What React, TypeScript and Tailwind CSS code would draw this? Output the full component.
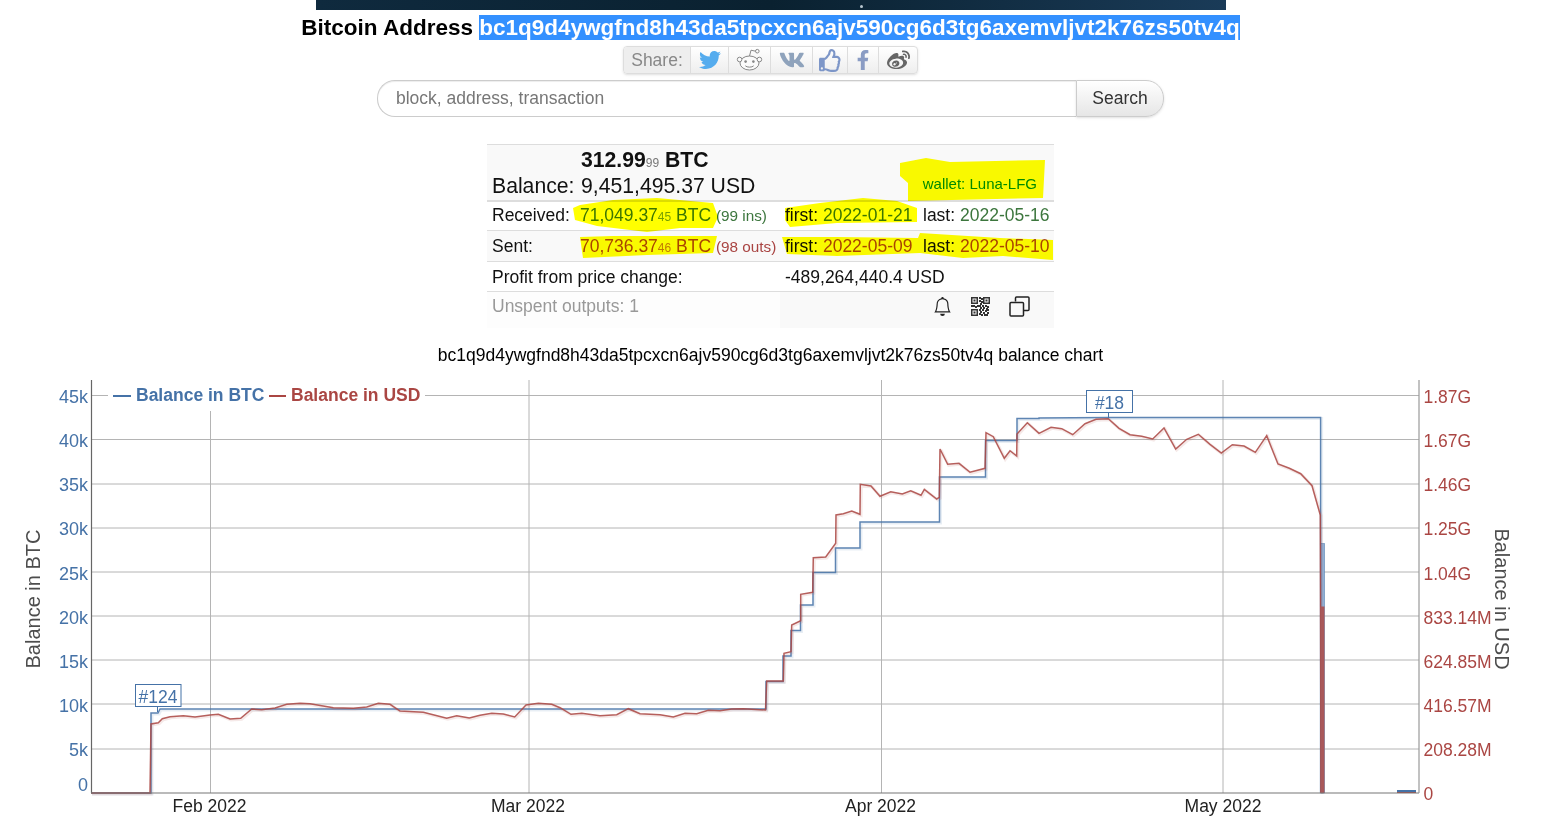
import React from 'react';
import { FaTwitter, FaVk, FaRegThumbsUp, FaFacebookF, FaWeibo } from 'react-icons/fa';
import { BsBell } from 'react-icons/bs';

const address = 'bc1q9d4ywgfnd8h43da5tpcxcn6ajv590cg6d3tg6axemvljvt2k76zs50tv4q';

const BLUE = '#4572a7';
const RED = '#aa4643';

const leftLabels = ['45k', '40k', '35k', '30k', '25k', '20k', '15k', '10k', '5k'];
const rightLabels = ['1.87G', '1.67G', '1.46G', '1.25G', '1.04G', '833.14M', '624.85M', '416.57M', '208.28M'];
const gridY = [395.5, 439.5, 484, 528, 572, 616, 660, 704, 749];
const labelY = [402.5, 446.5, 490.5, 534.5, 579.5, 623.5, 667.5, 711.5, 755.5];

const months = [
  { x: 210.5, textX: 209.5, label: 'Feb 2022' },
  { x: 529, textX: 528, label: 'Mar 2022' },
  { x: 881.5, textX: 880.5, label: 'Apr 2022' },
  { x: 1223, textX: 1223, label: 'May 2022' },
];

const btcLine =
  '91,793 151,793 151,713 158,713 160,709 766,709 766,681.5 783,681.5 783,656 791,656 791,630.5 800.5,630.5 800.5,605 813,605 813,572.5 835.5,572.5 835.5,548 860,548 860,522 939.5,522 939.5,477 985.5,477 985.5,440.5 1017,440.5 1017,418.5 1039,418.5 1039,418 1108,417.6 1320.6,417.6 1320.6,793';

const usdLine =
  '91,793 150,793 151,724 158.3,722.7 162.3,718.7 170,716.7 183.3,715.7 195,717 210,715 218.3,714.3 230,719 240.7,718.3 251.7,709 261.7,709.7 275,708 286.7,704.3 300,703.3 310,703.7 321.7,705.7 333.3,707.7 353.3,708.3 366.7,707 378.3,703.3 390,704.3 400,711 423.3,712.3 446.7,718.3 456.7,715.7 469.3,718 480,715.3 491.7,713.3 503.3,714 514.7,717 526,705 538.3,703.3 551.7,704.3 560,707.7 571,714.3 581.7,713.3 600,715.7 616.7,714.7 628.3,708.7 640,713.7 660,714.7 673.3,717 685,713.3 696.7,713.7 708.3,710.3 720,710.7 731.7,709 743.3,708.7 765.5,710 766.7,681 783.3,681 784,653.3 791,651.7 791.7,625 800.7,620.7 800.7,594.3 812.7,592.3 813.3,557.7 825.7,557 835.7,543.3 836,515 843.3,513.7 851.7,511 860,514.3 860.3,484.3 871,486 880,496.3 890.7,491.7 902.3,494 910.7,490.7 921,495.3 924.3,489.3 936.7,499 939.3,497.3 940,449 947.7,464.3 959,463.3 970,472.3 985,468.3 986,432.7 993.3,436.7 1004.3,458.3 1010,450.7 1016.7,456 1017,434 1027.3,422.7 1039,433.3 1051,427.3 1061.7,428.7 1072.7,434.7 1085,423.7 1096,419.3 1108.3,418.7 1119,428.3 1130,434.7 1141.7,436.3 1152.7,439 1164,428 1175.7,449 1186.7,439.3 1198.3,434.3 1210,444.3 1221.3,453 1232.3,444.7 1244,446 1255.3,452.3 1266.7,435.7 1278,464 1289.3,468.3 1300.7,473.7 1312,485.7 1320.3,515 1321,793';

function RedditIcon() {
  return (
    <svg width="27" height="24" viewBox="0 0 27 24" fill="none" stroke="#888" strokeWidth="1">
      <ellipse cx="13.5" cy="15" rx="9.5" ry="7" fill="#fbfbfb" />
      <circle cx="3.6" cy="11.5" r="2.3" fill="#fbfbfb" />
      <circle cx="23.4" cy="11.5" r="2.3" fill="#fbfbfb" />
      <path d="M13.5 8 L15 2.2 L19.5 3.2" />
      <circle cx="21.3" cy="3.2" r="1.8" />
      <circle cx="9.6" cy="13.6" r="1.3" fill="#888" stroke="none" />
      <circle cx="17.4" cy="13.6" r="1.3" fill="#888" stroke="none" />
      <path d="M9.3 17.8 C11 19.6 16 19.6 17.7 17.8" />
    </svg>
  );
}

function QrIcon() {
  const dots = [
    [8, 0], [10, 1], [8, 3], [10, 4], [9, 6], [0, 8], [2, 8], [4, 9], [6, 8], [8, 8], [11, 8], [14, 8], [16, 9],
    [9, 10], [12, 10], [15, 11], [8, 12], [11, 12], [14, 13], [16, 12], [9, 14], [12, 15], [16, 15], [8, 16], [10, 17], [13, 17], [15, 17],
  ];
  return (
    <svg width="19" height="19" viewBox="0 0 19 19" fill="#333">
      <path d="M0 0h7v7H0zM1.5 1.5v4h4v-4zM12 0h7v7h-7zM13.5 1.5v4h4v-4zM0 12h7v7H0zM1.5 13.5v4h4v-4z" fillRule="evenodd" />
      <rect x="2.5" y="2.5" width="2" height="2" />
      <rect x="14.5" y="2.5" width="2" height="2" />
      <rect x="2.5" y="14.5" width="2" height="2" />
      {dots.map(([x, y]) => (
        <rect key={`${x}-${y}`} x={x} y={y} width="2" height="2" />
      ))}
    </svg>
  );
}

function CopyIcon() {
  return (
    <svg width="21" height="21" viewBox="0 0 21 21" fill="none" stroke="#222" strokeWidth="1.5">
      <path d="M6.5 5.5V2a1 1 0 0 1 1-1H19a1 1 0 0 1 1 1v11.5a1 1 0 0 1-1 1h-4" />
      <rect x="1" y="6.5" width="13.5" height="13.5" rx="1" />
    </svg>
  );
}

function Highlights() {
  return (
    <svg
      className="absolute inset-0 mix-blend-multiply pointer-events-none"
      width="567"
      height="184"
      viewBox="487 144 567 184"
      fill="#ffff00"
    >
      <path d="M900 163 L926 158 L950 162 L1045 160 L1043 198 L908 201 L908 183 L900 176 Z" />
      <path d="M573 208 L580 205 L613 200 L657 198 L713 203 L718 217 L713 228 L680 228 L647 232 L597 226 L575 220 Z" />
      <path d="M580 237 L613 236 L717 236 L713 253 L647 255 L583 258 Z" />
      <path d="M785 208 L820 203 L863 198 L897 201 L917 208 L917 222 L837 223 L790 227 L785 220 Z" />
      <path d="M782 237 L837 237 L918 238 L920 233 L1000 238 L1053 240 L1053 260 L1003 256 L963 258 L920 253 L837 256 L787 254 Z" />
    </svg>
  );
}

function BalanceTable() {
  return (
    <div className="relative w-[567px] mx-auto mt-[27px] text-[17.5px] text-[#111]">
      <table className="w-[567px] table-fixed border-collapse">
        <colgroup>
          <col className="w-[88px]" />
          <col className="w-[205px]" />
          <col className="w-[274px]" />
        </colgroup>
        <tbody>
          <tr className="h-[56px] bg-[#f9f9f9] border-t border-b-2 border-[#ddd] align-bottom">
            <td className="pl-[5px] pb-[2px] text-[21.2px] leading-[25px]">Balance:</td>
            <td className="pl-[6px] pb-[2px] text-[21.2px] leading-[25px] whitespace-nowrap">
              <div className="mb-[1px]">
                <b>312.99</b>
                <span className="text-[12px] leading-none text-[#777]">99</span> <b>BTC</b>
              </div>
              <div>9,451,495.37 USD</div>
            </td>
            <td className="pr-[17px] pb-[6px] text-right text-[15px] leading-[20px] text-[#008a00]">wallet: Luna-LFG</td>
          </tr>
          <tr className="h-[30px] border-b border-[#ddd]">
            <td className="pl-[5px] pb-[2px]">Received:</td>
            <td className="pl-[5px] pb-[2px] whitespace-nowrap text-[#3c763d]">
              71,049.37<span className="text-[12px] leading-none opacity-70">45</span> BTC <span className="text-[15.3px] leading-none">(99 ins)</span>
            </td>
            <td className="pl-[5px] pb-[2px] whitespace-nowrap">
              <span className="inline-block w-[138px]">
                first: <span className="text-[#3c763d]">2022-01-21</span>
              </span>
              last: <span className="text-[#3c763d]">2022-05-16</span>
            </td>
          </tr>
          <tr className="h-[31px] bg-[#f9f9f9] border-b border-[#ddd]">
            <td className="pl-[5px]">Sent:</td>
            <td className="pl-[5px] whitespace-nowrap text-[#a94442]">
              70,736.37<span className="text-[12px] leading-none opacity-70">46</span> BTC <span className="text-[15.3px] leading-none">(98 outs)</span>
            </td>
            <td className="pl-[5px] whitespace-nowrap">
              <span className="inline-block w-[138px]">
                first: <span className="text-[#a94442]">2022-05-09</span>
              </span>
              last: <span className="text-[#a94442]">2022-05-10</span>
            </td>
          </tr>
          <tr className="h-[30px] border-b border-[#ddd]">
            <td colSpan={2} className="pl-[5px] pt-[2px]">Profit from price change:</td>
            <td className="pl-[5px] pt-[2px]">-489,264,440.4 USD</td>
          </tr>
          <tr className="h-[36px]">
            <td colSpan={2} className="pl-[5px] pb-[7px] bg-[#fdfdfd] text-[#999]">Unspent outputs: 1</td>
            <td className="bg-[#f9f9f9] pb-[7px]">
              <div className="flex items-center justify-end gap-[19px] pr-[24px]">
                <BsBell size={19} color="#222" />
                <QrIcon />
                <CopyIcon />
              </div>
            </td>
          </tr>
        </tbody>
      </table>
      <Highlights />
    </div>
  );
}

function BalanceChart() {
  return (
    <svg className="block mt-[10px]" width="1541" height="443" viewBox="0 375 1541 443" fontFamily="'Liberation Sans', Arial, sans-serif">
      {gridY.map(y => (
        <line key={y} x1="91" x2="1419" y1={y} y2={y} stroke="#b4b4b4" strokeWidth="1" />
      ))}
      {months.map(m => (
        <line key={m.x} x1={m.x} x2={m.x} y1="380" y2="793" stroke="#b4b4b4" strokeWidth="1" />
      ))}

      <rect x="108" y="380" width="317" height="31" fill="#fff" />
      <line x1="113" x2="131" y1="396" y2="396" stroke={BLUE} strokeWidth="2" />
      <text x="136" y="401" fontSize="17.5" fontWeight="700" fill={BLUE}>Balance in BTC</text>
      <line x1="269" x2="286" y1="396" y2="396" stroke={RED} strokeWidth="2" />
      <text x="291" y="401" fontSize="17.5" fontWeight="700" fill={RED}>Balance in USD</text>

      {/* lines with the faint offset shadow */}
      <polyline points={btcLine} fill="none" stroke={BLUE} strokeWidth="3" opacity="0.12" transform="translate(1 1)" />
      <polyline points={btcLine} fill="none" stroke={BLUE} strokeWidth="1.5" opacity="0.85" />
      <rect x="1321" y="543.5" width="3.5" height="249.5" fill="#8faed3" stroke={BLUE} strokeWidth="0.5" />
      <rect x="1397" y="790" width="19" height="2" fill={BLUE} />
      <polyline points={usdLine} fill="none" stroke={RED} strokeWidth="3" opacity="0.12" transform="translate(1 1)" />
      <polyline points={usdLine} fill="none" stroke={RED} strokeWidth="1.5" opacity="0.85" />
      <rect x="1320.5" y="606.5" width="4" height="186.5" fill="#a9585a" />
      <rect x="1397" y="792" width="19" height="1" fill={RED} />

      <line x1="91.5" x2="91.5" y1="380" y2="793" stroke="#666" strokeWidth="1.2" />
      <line x1="91" x2="1419" y1="793" y2="793" stroke="#777" strokeWidth="1.2" />
      <line x1="1419" x2="1419" y1="380" y2="793" stroke="#999" strokeWidth="1.2" />

      {/* flags */}
      <path d="M157.5 706 V712" stroke={BLUE} strokeWidth="1" />
      <rect x="135.5" y="684.5" width="45.5" height="22" fill="#fff" stroke={BLUE} strokeWidth="1" />
      <text x="158" y="703" fontSize="17.5" textAnchor="middle" fill={BLUE}>#124</text>
      <path d="M1108.5 412 V418" stroke={BLUE} strokeWidth="1" />
      <rect x="1086.5" y="390.5" width="46" height="22" fill="#fff" stroke={BLUE} strokeWidth="1" />
      <text x="1109.5" y="409" fontSize="17.5" textAnchor="middle" fill={BLUE}>#18</text>

      {leftLabels.map((label, i) => (
        <text key={label} x="88" y={labelY[i]} fontSize="18" textAnchor="end" fill={BLUE}>{label}</text>
      ))}
      <text x="88" y="791" fontSize="18" textAnchor="end" fill={BLUE}>0</text>
      {rightLabels.map((label, i) => (
        <text key={label} x="1423.5" y={labelY[i]} fontSize="17.5" fill={RED}>{label}</text>
      ))}
      <text x="1423.5" y="800" fontSize="17.5" fill={RED}>0</text>

      {months.map(m => (
        <text key={m.label} x={m.textX} y="812" fontSize="17.5" textAnchor="middle" fill="#222">{m.label}</text>
      ))}

      <text transform="translate(40 599) rotate(-90)" fontSize="20" textAnchor="middle" fill="#4d4d4d">Balance in BTC</text>
      <text transform="translate(1495 599) rotate(90)" fontSize="20" textAnchor="middle" fill="#4d4d4d">Balance in USD</text>
    </svg>
  );
}

export default function App() {
  return (
    <div className="w-[1541px] h-[818px] overflow-hidden bg-white font-['Liberation_Sans',Arial,sans-serif]">
      <div className="relative w-[910px] h-[10px] mx-auto bg-gradient-to-r from-[#0f2a3e] via-[#0a2130] to-[#1a3b58]">
        <span className="absolute left-[544px] top-[5px] w-[3px] h-[3px] rounded-full bg-[#b9c6cf]"></span>
      </div>

      <h1 className="mt-[5px] h-[25px] text-center text-[22.5px] leading-[25px] font-bold text-black whitespace-nowrap">
        Bitcoin Address <span className="bg-[#3390ff] text-white inline-block h-[25px]">{address}</span>
      </h1>

      <div className="mt-[6px] mx-auto flex w-[295px] h-[28px] rounded-[4px] border border-[#ddd] bg-gradient-to-b from-white to-[#eeeeee] shadow-sm overflow-hidden">
        <div className="w-[67px] flex items-center justify-center border-r border-[#ddd] bg-[#eeeeee] text-[17.5px] text-[#888]">Share:</div>
        <div className="w-[38px] flex items-center justify-center border-r border-[#ddd]"><FaTwitter size={22} color="#55acee" /></div>
        <div className="w-[42px] flex items-center justify-center border-r border-[#ddd]"><RedditIcon /></div>
        <div className="w-[42px] flex items-center justify-center border-r border-[#ddd]"><FaVk size={26} color="#8fa3bc" /></div>
        <div className="w-[35px] flex items-center justify-center border-r border-[#ddd]"><FaRegThumbsUp size={23} color="#7d96c8" /></div>
        <div className="w-[31px] flex items-center justify-center border-r border-[#ddd]"><FaFacebookF size={20} color="#8a9cc4" /></div>
        <div className="flex-1 flex items-center justify-center"><FaWeibo size={23} color="#666" /></div>
      </div>

      <div className="mt-[6px] mx-auto flex w-[787px] h-[37px]">
        <input
          type="text"
          placeholder="block, address, transaction"
          className="w-[699px] h-full pl-[18px] border border-[#ccc] border-r-0 rounded-l-[18px] bg-white text-[17.5px] placeholder:text-[#777] outline-none shadow-[inset_0_1px_1px_rgba(0,0,0,0.075)]"
        />
        <button className="w-[88px] h-full border border-[#ccc] rounded-r-[18px] bg-gradient-to-b from-white to-[#e6e6e6] text-[17.5px] text-[#333] shadow-sm">
          Search
        </button>
      </div>

      <BalanceTable />

      <div className="mt-[17px] h-[20px] text-center text-[17.5px] leading-[20px] text-black whitespace-nowrap">
        {address} balance chart
      </div>

      <BalanceChart />
    </div>
  );
}
